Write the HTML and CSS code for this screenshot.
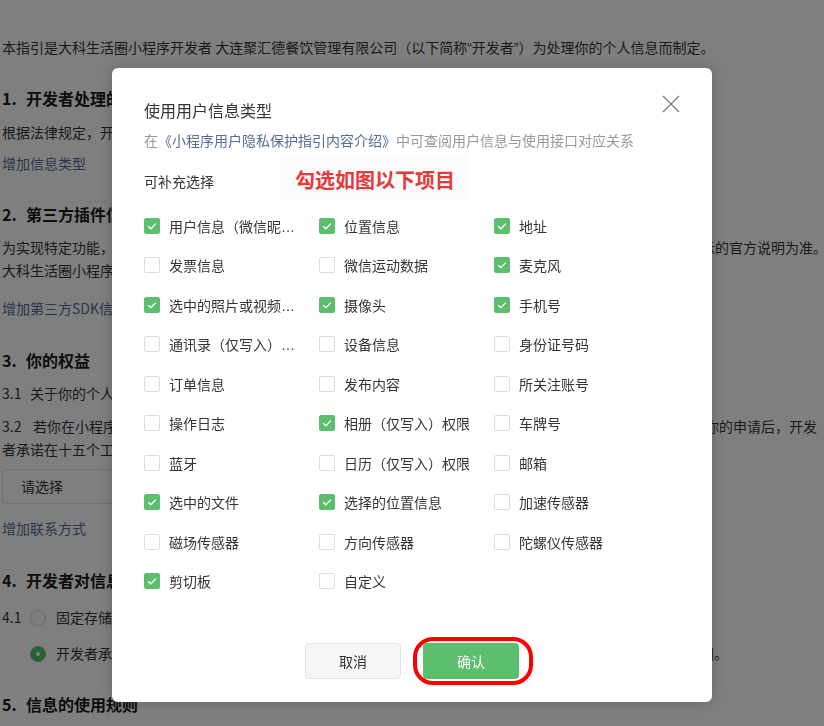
FILE: index.html
```html
<!DOCTYPE html>
<html lang="zh-CN">
<head>
<meta charset="utf-8">
<title>用户隐私保护指引</title>
<link rel="stylesheet" href="styles.css">
</head>
<body>
<div class="page">
  <p class="lead">本指引是大科生活圈小程序开发者 大连聚汇德餐饮管理有限公司（以下简称<span class="q">“</span>开发者<span class="q">”</span>）为处理你的个人信息而制定。</p>

  <h2 class="sec"><span class="num">1.</span>开发者处理的信息</h2>
  <p class="after-sec">根据法律规定，开发者仅处理实现小程序功能所必要的信息。</p>
  <a class="add">增加信息类型</a>

  <h2 class="sec"><span class="num">2.</span>第三方插件信息</h2>
  <p class="after-sec">为实现特定功能，开发者可能会接入由第三方提供的插件。第三方插件或SDK的个人信息处理规则，请以其各自公示的官方说明为准。<br>大科生活圈小程序接入的第三方插件信息如下：</p>
  <a class="add add-sdk">增加第三方SDK信息</a>

  <h2 class="sec sec-lo"><span class="num">3.</span>你的权益</h2>
  <p class="after-sec"><span class="sub">3.1</span>关于你的个人信息，你可以通过以下方式与开发者联系，行使查阅、复制、更正、删除等法定权利。</p>
  <p><span class="sub sub2">3.2</span>若你在小程序中有关于个人信息处理的任何问题、意见或投诉，可以通过下方联系方式与开发者联系，在收到你的申请后，开发<br>者承诺在十五个工作日内予以答复。</p>
  <div class="select">请选择</div>
  <a class="add add-contact">增加联系方式</a>

  <h2 class="sec sec-lo"><span class="num">4.</span>开发者对信息的存储</h2>
  <div class="opt first"><span class="sub">4.1</span><span class="radio"></span><span>固定存储期限</span></div>
  <div class="opt"><span class="radio on"></span><span>开发者承诺，除法律法规另有规定外，开发者对你的信息的保存期限应当为实现处理目的所必要的最短时间。</span></div>

  <h2 class="sec"><span class="num">5.</span>信息的使用规则</h2>
</div>

<div class="mask"></div>

<div class="dialog">
  <div class="dlg-title">使用用户信息类型</div>
  <svg class="close" width="18" height="18" viewBox="0 0 18 18"><path d="M1 1L17 17M17 1L1 17" stroke="#7f7f7f" stroke-width="1.4" fill="none"/></svg>
  <div class="dlg-sub">在<a class="dlg-link">《小程序用户隐私保护指引内容介绍》</a>中可查阅用户信息与使用接口对应关系</div>
  <div class="dlg-label">可补充选择</div>
  <div class="note">勾选如图以下项目</div>

  <div class="grid">
    <label class="item"><span class="box on"><svg viewBox="0 0 16 16"><path d="M4.2 8.2L6.9 10.8L11.8 5.6" /></svg></span><span class="txt">用户信息（微信昵称、头像）</span></label>
    <label class="item"><span class="box on"><svg viewBox="0 0 16 16"><path d="M4.2 8.2L6.9 10.8L11.8 5.6" /></svg></span><span class="txt">位置信息</span></label>
    <label class="item"><span class="box on"><svg viewBox="0 0 16 16"><path d="M4.2 8.2L6.9 10.8L11.8 5.6" /></svg></span><span class="txt">地址</span></label>

    <label class="item"><span class="box"></span><span class="txt">发票信息</span></label>
    <label class="item"><span class="box"></span><span class="txt">微信运动数据</span></label>
    <label class="item"><span class="box on"><svg viewBox="0 0 16 16"><path d="M4.2 8.2L6.9 10.8L11.8 5.6" /></svg></span><span class="txt">麦克风</span></label>

    <label class="item"><span class="box on"><svg viewBox="0 0 16 16"><path d="M4.2 8.2L6.9 10.8L11.8 5.6" /></svg></span><span class="txt">选中的照片或视频信息</span></label>
    <label class="item"><span class="box on"><svg viewBox="0 0 16 16"><path d="M4.2 8.2L6.9 10.8L11.8 5.6" /></svg></span><span class="txt">摄像头</span></label>
    <label class="item"><span class="box on"><svg viewBox="0 0 16 16"><path d="M4.2 8.2L6.9 10.8L11.8 5.6" /></svg></span><span class="txt">手机号</span></label>

    <label class="item"><span class="box"></span><span class="txt">通讯录（仅写入）权限</span></label>
    <label class="item"><span class="box"></span><span class="txt">设备信息</span></label>
    <label class="item"><span class="box"></span><span class="txt">身份证号码</span></label>

    <label class="item"><span class="box"></span><span class="txt">订单信息</span></label>
    <label class="item"><span class="box"></span><span class="txt">发布内容</span></label>
    <label class="item"><span class="box"></span><span class="txt">所关注账号</span></label>

    <label class="item"><span class="box"></span><span class="txt">操作日志</span></label>
    <label class="item"><span class="box on"><svg viewBox="0 0 16 16"><path d="M4.2 8.2L6.9 10.8L11.8 5.6" /></svg></span><span class="txt">相册（仅写入）权限</span></label>
    <label class="item"><span class="box"></span><span class="txt">车牌号</span></label>

    <label class="item"><span class="box"></span><span class="txt">蓝牙</span></label>
    <label class="item"><span class="box"></span><span class="txt">日历（仅写入）权限</span></label>
    <label class="item"><span class="box"></span><span class="txt">邮箱</span></label>

    <label class="item"><span class="box on"><svg viewBox="0 0 16 16"><path d="M4.2 8.2L6.9 10.8L11.8 5.6" /></svg></span><span class="txt">选中的文件</span></label>
    <label class="item"><span class="box on"><svg viewBox="0 0 16 16"><path d="M4.2 8.2L6.9 10.8L11.8 5.6" /></svg></span><span class="txt">选择的位置信息</span></label>
    <label class="item"><span class="box"></span><span class="txt">加速传感器</span></label>

    <label class="item"><span class="box"></span><span class="txt">磁场传感器</span></label>
    <label class="item"><span class="box"></span><span class="txt">方向传感器</span></label>
    <label class="item"><span class="box"></span><span class="txt">陀螺仪传感器</span></label>

    <label class="item"><span class="box on"><svg viewBox="0 0 16 16"><path d="M4.2 8.2L6.9 10.8L11.8 5.6" /></svg></span><span class="txt">剪切板</span></label>
    <label class="item"><span class="box"></span><span class="txt">自定义</span></label>
  </div>

  <div class="footer">
    <button class="btn btn-cancel">取消</button>
    <button class="btn btn-ok">确认</button>
  </div>
</div>

<div class="ring"></div>
</body>
</html>
```

FILE: styles.css
```css
* { box-sizing: border-box; }
html, body { margin: 0; height: 100%; }
body {
  font-family: "Noto Sans CJK SC", "Noto Sans", sans-serif;
  background: #fff;
  color: #353535;
  overflow: hidden;
}

/* ---------- background page ---------- */
.page {
  padding: 35.5px 0 0 2px;
  font-size: 14px;
  line-height: 23px;
  white-space: nowrap;
}
.page p { margin: 9.5px 0 0; }
.page p.lead { margin: 0; }
.page p.after-sec { margin-top: 10.5px; }
.q { font-family: "Liberation Sans", sans-serif; }
.sec {
  margin: 26.5px 0 0;
  font-size: 16px;
  line-height: 24px;
  font-weight: 600;
  color: #1a1a1a;
}
.sec.sec-lo { margin-top: 27.5px; }
.sec .num { display: inline-block; width: 24px; }
.add {
  display: block;
  margin-top: 8.5px;
  color: #576b95;
}
.add-sdk { margin-top: 15px; }
.add-contact { margin-top: 13px; }
.sub { display: inline-block; width: 28px; }
.sub2 { width: 31px; }
.select {
  margin-top: 8.5px;
  width: 320px;
  height: 35px;
  border: 1px solid #e1e1e1;
  border-radius: 4px;
  padding-left: 18px;
  line-height: 33px;
}
.opt {
  display: flex;
  align-items: center;
  gap: 10px;
  height: 23px;
  margin: 13px 0 0 28px;
}
.opt.first { margin: 14.5px 0 0 0; gap: 0; }
.opt.first .radio { margin-right: 10px; }
.radio {
  width: 16px;
  height: 16px;
  border: 1px solid #d4d4d4;
  border-radius: 50%;
  flex: none;
  position: relative;
}
.radio.on { background: #5bbf6d; border-color: #5bbf6d; }
.radio.on::after {
  content: "";
  position: absolute;
  left: 5px; top: 5px;
  width: 4px; height: 4px;
  border-radius: 50%;
  background: #fff;
}

/* ---------- mask & dialog ---------- */
.mask {
  position: fixed;
  inset: 0;
  background: rgba(0, 0, 0, 0.5);
}
.dialog {
  position: fixed;
  left: 112px;
  top: 68px;
  width: 600px;
  height: 634px;
  background: #fff;
  border-radius: 6px;
  box-shadow: 0 0 14px rgba(0, 0, 0, 0.22);
  padding: 30px 32px 0;
  display: flex;
  flex-direction: column;
}
.dlg-title {
  font-size: 16px;
  line-height: 24px;
  color: #353535;
}
.close {
  position: absolute;
  top: 27px;
  right: 32px;
}
.dlg-sub {
  margin-top: 8px;
  font-size: 14px;
  line-height: 20px;
  color: #999;
}
.dlg-link { color: #576b95; }
.dlg-label {
  margin-top: 21px;
  font-size: 14px;
  line-height: 20px;
  color: #353535;
}
.note {
  position: absolute;
  left: 167px;
  top: 87px;
  width: 189px;
  height: 46px;
  background: #fcfcfc;
  padding: 11px 0 0 16px;
  font-size: 20px;
  line-height: 28px;
  font-weight: 700;
  color: #e63a3a;
}
.grid {
  margin-top: 15px;
  display: grid;
  grid-template-columns: repeat(3, 175px);
  grid-auto-rows: 39.5px;
}
.item {
  display: flex;
  align-items: center;
  gap: 9px;
  font-size: 14px;
  color: #353535;
}
.box {
  width: 16px;
  height: 16px;
  flex: none;
  border: 1px solid #dcdcdc;
  border-radius: 2px;
  background: #fff;
  display: flex;
}
.box.on { background: #5bbf6d; border-color: #5bbf6d; }
.box svg { width: 16px; height: 16px; margin: -1px; }
.box svg path { fill: none; stroke: #fff; stroke-width: 1.3; }
.txt {
  max-width: 126px;
  overflow: hidden;
  white-space: nowrap;
  text-overflow: ellipsis;
  font-family: "Liberation Sans", "Noto Sans CJK SC", sans-serif;
}
.footer {
  margin-top: 42px;
  display: flex;
  justify-content: center;
  gap: 22px;
}
.btn {
  width: 96px;
  height: 36px;
  border-radius: 4px;
  font-family: inherit;
  font-size: 14px;
  padding: 0;
}
.btn-cancel {
  background: #f5f6f7;
  border: 1px solid #e2e3e5;
  color: #353535;
}
.btn-ok {
  background: #5bbf6d;
  border: none;
  color: #fff;
}

/* red annotation ring */
.ring {
  position: fixed;
  left: 413px;
  top: 637px;
  width: 120px;
  height: 48px;
  border: 4.5px solid #ff0000;
  border-radius: 20px;
}
```
